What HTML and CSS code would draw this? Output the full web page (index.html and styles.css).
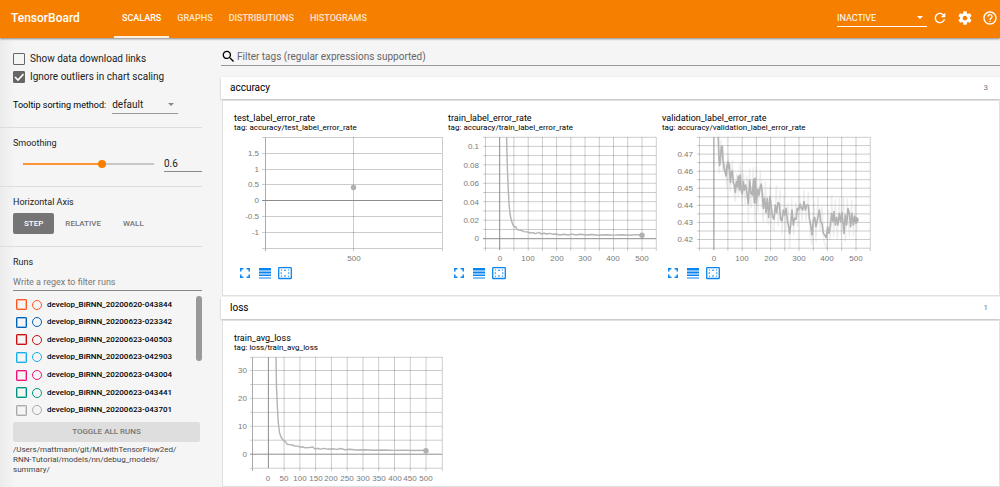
FILE: index.html
```html
<!DOCTYPE html>
<html lang="en">
<head>
<meta charset="utf-8">
<title>TensorBoard</title>
<link rel="stylesheet" href="styles.css">
</head>
<body>
<svg class="defs" aria-hidden="true">
  <symbol id="i-full" viewBox="0 0 14 14"><path d="M2.8 5.4V2.8H5.4M8.6 2.8H11.2V5.4M11.2 8.6V11.2H8.6M5.4 11.2H2.8V8.6" fill="none" stroke="currentColor" stroke-width="1.5"/></symbol>
  <symbol id="i-lines" viewBox="0 0 14 14"><path d="M1 2h12v2.6H1zM1 5.5h12v2H1zM1 8.6h12v1.5H1zM1 11.4h12v1H1z" fill="currentColor"/></symbol>
  <symbol id="i-fit" viewBox="0 0 14 14"><rect x=".7" y="1.7" width="12.6" height="10.8" rx=".6" fill="none" stroke="currentColor" stroke-width="1.3"/><path d="M7 3.2l1.4 1.5H5.6zM7 11l1.4-1.5H5.6zM2.3 7.1l1.3-1.3v2.6zM11.7 7.1l-1.3-1.3v2.6zM3 3.4h1v1H3zM10 3.4h1v1h-1zM3 9.8h1v1H3zM10 9.8h1v1h-1z" fill="currentColor"/></symbol>
</svg>

<header class="topbar">
  <h1 class="brand">TensorBoard</h1>
  <nav class="tabs">
    <a class="tab tab-active" href="#scalars">SCALARS</a>
    <a class="tab" href="#graphs">GRAPHS</a>
    <a class="tab" href="#distributions">DISTRIBUTIONS</a>
    <a class="tab" href="#histograms">HISTOGRAMS</a>
  </nav>
  <div class="actions">
    <select class="select select-inactive" aria-label="Inactive dashboards"><option>INACTIVE</option></select>
    <button class="icon-btn" aria-label="Reload"><svg viewBox="0 0 24 24"><path d="M17.65 6.35C16.2 4.9 14.21 4 12 4c-4.42 0-7.99 3.58-7.99 8s3.57 8 7.99 8c3.73 0 6.84-2.55 7.73-6h-2.08c-.82 2.33-3.04 4-5.65 4-3.31 0-6-2.69-6-6s2.69-6 6-6c1.66 0 3.14.69 4.22 1.78L13 11h7V4l-2.35 2.35z"/></svg></button>
    <button class="icon-btn" aria-label="Settings"><svg viewBox="0 0 24 24"><path d="M19.43 12.98c.04-.32.07-.64.07-.98s-.03-.66-.07-.98l2.11-1.65c.19-.15.24-.42.12-.64l-2-3.46c-.12-.22-.39-.3-.61-.22l-2.49 1c-.52-.4-1.08-.73-1.69-.98l-.38-2.65C14.46 2.18 14.25 2 14 2h-4c-.25 0-.46.18-.49.42l-.38 2.65c-.61.25-1.17.59-1.69.98l-2.49-1c-.23-.09-.49 0-.61.22l-2 3.46c-.13.22-.07.49.12.64l2.11 1.65c-.04.32-.07.65-.07.98s.03.66.07.98l-2.11 1.65c-.19.15-.24.42-.12.64l2 3.46c.12.22.39.3.61.22l2.49-1c.52.4 1.08.73 1.69.98l.38 2.65c.03.24.24.42.49.42h4c.25 0 .46-.18.49-.42l.38-2.65c.61-.25 1.17-.59 1.69-.98l2.49 1c.23.09.49 0 .61-.22l2-3.46c.12-.22.07-.49-.12-.64l-2.11-1.65zM12 15.5c-1.93 0-3.5-1.57-3.5-3.5s1.57-3.5 3.5-3.5 3.5 1.57 3.5 3.5-1.57 3.5-3.5 3.5z"/></svg></button>
    <button class="icon-btn" aria-label="Help"><svg viewBox="0 0 24 24"><path d="M11 18h2v-2h-2v2zm1-16C6.48 2 2 6.48 2 12s4.48 10 10 10 10-4.48 10-10S17.52 2 12 2zm0 18c-4.41 0-8-3.59-8-8s3.59-8 8-8 8 3.59 8 8-3.59 8-8 8zm0-14c-2.21 0-4 1.79-4 4h2c0-1.1.9-2 2-2s2 .9 2 2c0 2-3 1.75-3 5h2c0-2.25 3-2.5 3-5 0-2.21-1.79-4-4-4z"/></svg></button>
  </div>
</header>

<div class="layout">
  <aside class="sidebar">
    <section class="group group-options">
      <label class="check"><input type="checkbox"> Show data download links</label>
      <label class="check"><input type="checkbox" checked> Ignore outliers in chart scaling</label>
      <div class="sorting">
        <label for="sort">Tooltip sorting method:</label>
        <select class="select select-sort" id="sort"><option>default</option></select>
      </div>
    </section>
    <section class="group group-smoothing">
      <label class="title" for="smooth">Smoothing</label>
      <div class="slider-row">
        <input class="slider" id="smooth" type="range" min="0" max="1" step="0.1" value="0.6">
        <input class="slider-value" type="text" value="0.6" aria-label="Smoothing value">
      </div>
    </section>
    <section class="group group-axis">
      <h2 class="title">Horizontal Axis</h2>
      <div class="axis-buttons">
        <button class="axis-btn axis-on">STEP</button>
        <button class="axis-btn">RELATIVE</button>
        <button class="axis-btn">WALL</button>
      </div>
    </section>
    <section class="runs">
      <h2 class="title">Runs</h2>
      <input class="run-filter" type="text" placeholder="Write a regex to filter runs" aria-label="Filter runs">
      <div class="run-scroller">
        <ul class="run-list">
          <li class="run run-1"><input type="checkbox" id="r1"><input type="radio" name="run" aria-label="Only run 1"><label for="r1">develop_BiRNN_20200620-043844</label></li>
          <li class="run run-2"><input type="checkbox" id="r2"><input type="radio" name="run" aria-label="Only run 2"><label for="r2">develop_BiRNN_20200623-023342</label></li>
          <li class="run run-3"><input type="checkbox" id="r3"><input type="radio" name="run" aria-label="Only run 3"><label for="r3">develop_BiRNN_20200623-040503</label></li>
          <li class="run run-4"><input type="checkbox" id="r4"><input type="radio" name="run" aria-label="Only run 4"><label for="r4">develop_BiRNN_20200623-042903</label></li>
          <li class="run run-5"><input type="checkbox" id="r5"><input type="radio" name="run" aria-label="Only run 5"><label for="r5">develop_BiRNN_20200623-043004</label></li>
          <li class="run run-6"><input type="checkbox" id="r6"><input type="radio" name="run" aria-label="Only run 6"><label for="r6">develop_BiRNN_20200623-043441</label></li>
          <li class="run run-7"><input type="checkbox" id="r7"><input type="radio" name="run" aria-label="Only run 7"><label for="r7">develop_BiRNN_20200623-043701</label></li>
        </ul>
        <div class="scroll-thumb"></div>
      </div>
      <button class="toggle-all">TOGGLE ALL RUNS</button>
      <p class="logdir">/Users/mattmann/git/MLwithTensorFlow2ed/<br>RNN-Tutorial/models/nn/debug_models/<br>summary/</p>
    </section>
  </aside>

  <main class="content">
    <label class="search">
      <svg viewBox="2 2 20 20" aria-hidden="true"><path d="M15.5 14h-.79l-.28-.27C15.41 12.59 16 11.11 16 9.5 16 5.91 13.09 3 9.5 3S3 5.91 3 9.5 5.91 16 9.5 16c1.61 0 3.09-.59 4.23-1.57l.27.28v.79l5 4.99L20.49 19l-4.99-5zm-6 0C7.01 14 5 11.99 5 9.5S7.01 5 9.5 5 14 7.01 14 9.5 11.99 14 9.5 14z"/></svg>
      <input type="text" placeholder="Filter tags (regular expressions supported)" aria-label="Filter tags">
    </label>

    <section class="category">
      <button class="category-head"><span>accuracy</span><span class="count">3</span></button>
      <div class="pane">
        <article class="card">
          <h3 class="card-title">test_label_error_rate</h3>
          <p class="card-tag">tag: accuracy/test_label_error_rate</p>
          <svg class="chart" viewBox="0 0 212 132">
            <path class="grid" d="M28 5.5H208M28 21.5H208M28 37.5H208M28 52.5H208M28 84.5H208M28 100.5H208M28 116.5H208M119.5 5V119M208.5 5V119"/>
            <path class="axis" d="M31.5 5V119"/>
            <path class="zero" d="M28 68.5H208"/>
            <circle class="dot" cx="119.5" cy="55.5" r="2.7"/>
            <g class="ylab"><text x="25" y="24">1.5</text><text x="25" y="40">1</text><text x="25" y="55">0.5</text><text x="25" y="71">0</text><text x="25" y="87">-0.5</text><text x="25" y="103">-1</text></g>
            <g class="xlab"><text x="120" y="129">500</text></g>
          </svg>
          <div class="tools"><button aria-label="Fullscreen"><svg><use href="#i-full"/></svg></button><button aria-label="Log scale"><svg><use href="#i-lines"/></svg></button><button aria-label="Fit domain"><svg><use href="#i-fit"/></svg></button></div>
        </article>

        <article class="card">
          <h3 class="card-title">train_label_error_rate</h3>
          <p class="card-tag">tag: accuracy/train_label_error_rate</p>
          <svg class="chart" viewBox="0 0 212 132">
            <path class="grid" d="M35 5.3H208M35 14.4H208M35 23.6H208M35 32.8H208M35 42.1H208M35 51.3H208M35 60.5H208M35 69.7H208M35 79H208M35 88.2H208M35 97.5H208M35 116.2H208M37.5 5V119M65.9 5V119M80.2 5V119M94.4 5V119M108.6 5V119M122.8 5V119M137 5V119M151.3 5V119M165.5 5V119M179.7 5V119M194 5V119M208.3 5V119"/>
            <path class="zero" d="M35 106.7H208M51.7 5V118"/>
            <path class="line" d="M58.6 5L59.3 35L60.4 60L61.2 74L62.2 83L63.5 89L65 93L66.5 95L67.7 94.6L69 97.3L71 98L73 98.3L76 99.6L80 100L82 101L85 100.6L87 101.7L90 100.8L91.5 100.4L93 102L96 101.3L99 102L102 101.4L105 102.3L108 102L112 103L116 102.3L120 103L124 102.1L128 103L132 102.3L138 103L144 102.5L150 103.2L158 102.7L166 103.1L174 102.8L182 103.2L188 102.6L194 103"/>
            <circle class="dot" cx="194" cy="103.2" r="2.7"/>
            <g class="ylab"><text x="31" y="17">0.1</text><text x="31" y="36">0.08</text><text x="31" y="54">0.06</text><text x="31" y="73">0.04</text><text x="31" y="91">0.02</text><text x="31" y="109">0</text></g>
            <g class="xlab"><text x="52" y="129">0</text><text x="80" y="129">100</text><text x="109" y="129">200</text><text x="137" y="129">300</text><text x="165" y="129">400</text><text x="194" y="129">500</text></g>
          </svg>
          <div class="tools"><button aria-label="Fullscreen"><svg><use href="#i-full"/></svg></button><button aria-label="Log scale"><svg><use href="#i-lines"/></svg></button><button aria-label="Fit domain"><svg><use href="#i-fit"/></svg></button></div>
        </article>

        <article class="card">
          <h3 class="card-title">validation_label_error_rate</h3>
          <p class="card-tag">tag: accuracy/validation_label_error_rate</p>
          <svg class="chart" viewBox="0 0 212 132">
            <path class="grid" d="M35 5.3H208M35 13.6H208M35 22.1H208M35 30.6H208M35 39.2H208M35 47.7H208M35 56.2H208M35 64.8H208M35 73.3H208M35 81.9H208M35 90.4H208M35 99H208M35 107.5H208M35 116.2H208M37.5 5V119M65.9 5V119M80.2 5V119M94.4 5V119M108.6 5V119M122.8 5V119M137 5V119M151.3 5V119M165.5 5V119M179.7 5V119M194 5V119M208.3 5V119"/>
            <path class="zero" d="M51.9 5V118"/>
            <g transform="translate(38 -2) scale(.3333)">
              <path class="raw" d="M54 22L57 130L63 30L69 125L75 95L80 170L85 72L91 185L97 90L102 190L106 215L110 130L115 200L121 100L126 225L131 130L136 225L141 135L145 280L149 115L154 235L160 112L165 275L169 108L174 245L181 120L186 230L190 276L196 155L202 275L206 285L210 165L216 295L222 300L229 165L235 290L240 180L246 312L252 195L258 300L264 220L269 355L275 205L281 315L287 215L293 290L299 195L306 275L312 180L318 275L325 185L331 320L336 345L342 215L348 335L354 200L360 305L366 230L372 335L379 356L385 240L391 330L395 195L401 320L406 208L412 328L418 205L424 315L430 200L436 335L442 205L448 320L455 210L460 318L466 225L472 300"/>
              <path class="noisy" d="M55 20L57 85L59 106L62 80L64 50L67 49L69 90L72 112L75 125L78 138L81 108L84 95L86 115L88 102L91 157L94 130L97 122L100 158L103 165L106 187L109 155L112 170L115 138L118 180L121 135L124 185L127 192L130 155L133 180L137 165L141 190L145 222L149 150L153 190L157 195L161 148L163 218L165 145L169 220L173 178L177 195L181 170L184 162L187 190L190 235L194 205L198 248L202 205L206 262L210 200L214 230L218 262L222 268L226 225L230 248L234 218L238 222L242 268L246 273L250 240L254 255L258 235L262 270L266 290L269 310L272 285L276 240L280 285L284 265L288 268L292 235L296 240L300 222L304 235L308 240L312 215L316 240L320 225L325 225L328 265L332 285L336 315L340 270L344 262L348 290L352 270L358 240L362 275L366 280L370 310L374 315L379 323L383 290L387 310L391 290L395 250L399 275L402 245L406 285L410 262L414 285L418 250L422 275L426 248L430 285L432 310L436 255L440 285L444 236L448 250L452 290L456 250L460 285L464 258L468 280L472 270"/>
            </g>
            <circle class="dot" cx="194" cy="87.8" r="2.7"/>
            <g class="ylab"><text x="31" y="25">0.47</text><text x="31" y="42">0.46</text><text x="31" y="59">0.45</text><text x="31" y="76">0.44</text><text x="31" y="93">0.43</text><text x="31" y="110">0.42</text></g>
            <g class="xlab"><text x="52" y="129">0</text><text x="80" y="129">100</text><text x="109" y="129">200</text><text x="137" y="129">300</text><text x="165" y="129">400</text><text x="194" y="129">500</text></g>
          </svg>
          <div class="tools"><button aria-label="Fullscreen"><svg><use href="#i-full"/></svg></button><button aria-label="Log scale"><svg><use href="#i-lines"/></svg></button><button aria-label="Fit domain"><svg><use href="#i-fit"/></svg></button></div>
        </article>
      </div>
    </section>

    <section class="category category-last">
      <button class="category-head"><span>loss</span><span class="count">1</span></button>
      <div class="pane">
        <article class="card">
          <h3 class="card-title">train_avg_loss</h3>
          <p class="card-tag">tag: loss/train_avg_loss</p>
          <svg class="chart" viewBox="0 0 212 132">
            <path class="grid" d="M16 5.3H208M16 18.5H208M16 32.5H208M16 46.4H208M16 60.4H208M16 74.3H208M16 88.2H208M16 116.2H208M50.1 5V119M65.9 5V119M81.6 5V119M97.4 5V119M113.2 5V119M129 5V119M144.7 5V119M160.5 5V119M176.3 5V119M192 5V119M208.3 5V119"/>
            <path class="axis" d="M18.5 5V119"/>
            <path class="zero" d="M16 102.2H208M34.4 5V116"/>
            <path class="line" d="M42 5L42.5 35L43.4 55L44.2 70L45.6 81L47 85L49 88L50.5 89.6L51.5 89.4L53 92.3L55 92.6L58 93L61 94L64 94.1L66 95.2L69 94.8L71 95.8L75 95.6L77 95.3L78.5 94.8L81 97L84 96.3L86 97.1L91 96.4L94 97.3L98 96.8L103 97.4L107 96.5L111 97.8L116 97.3L122 98L130 97.8L140 98.2L150 98L160 98.4L170 98.2L180 98.5L192 98.3"/>
            <circle class="dot" cx="192" cy="98.7" r="2.7"/>
            <g class="ylab"><text x="13" y="21">30</text><text x="13" y="49">20</text><text x="13" y="77">10</text><text x="13" y="105">0</text></g>
            <g class="xlab"><text x="34" y="129">0</text><text x="50" y="129">50</text><text x="66" y="129">100</text><text x="82" y="129">150</text><text x="97" y="129">200</text><text x="113" y="129">250</text><text x="129" y="129">300</text><text x="145" y="129">350</text><text x="161" y="129">400</text><text x="176" y="129">450</text><text x="192" y="129">500</text></g>
          </svg>
        </article>
      </div>
    </section>
  </main>
</div>
</body>
</html>
```

FILE: styles.css
```css
* { box-sizing: border-box; }
body {
  margin: 0;
  min-height: 100vh;
  display: flex;
  flex-direction: column;
  background: #f5f5f5;
  color: #212121;
  font: 10px/12px Roboto, "Liberation Sans", sans-serif;
}
button, input, select { font: inherit; color: inherit; margin: 0; padding: 0; border: 0; border-radius: 0; background: none; outline: none; }
h1, h2, h3, p, ul { margin: 0; padding: 0; font-weight: 400; font-size: inherit; }
ul { list-style: none; }
.defs { display: none; }

.topbar {
  display: flex;
  align-items: center;
  height: 38px;
  padding: 0 2px 0 11px;
  background: #f77f00;
  color: #fff;
  box-shadow: 0 1px 2px rgba(0, 0, 0, .45);
  z-index: 1;
}
.brand { width: 103px; font-size: 12px; font-weight: 500; line-height: 36px; padding-bottom: 2px; }
.tabs { display: flex; height: 38px; }
.tab { padding: 0 8px; line-height: 36px; font-size: 9px; font-weight: 500; color: #ffe5cc; text-decoration: none; border-bottom: 2px solid transparent; }
.tab-active { color: #fff; border-color: #fff0e0; }
.actions { display: flex; align-items: center; gap: 9px; margin-left: auto; padding-bottom: 2px; }
.icon-btn { display: block; width: 16px; height: 16px; }
.icon-btn svg { display: block; width: 16px; height: 16px; fill: #fff; }

.select { appearance: none; background-repeat: no-repeat; }
.select-inactive {
  width: 90px;
  height: 18px;
  margin-right: -4px;
  font-size: 9px;
  border-bottom: 1px solid #fff;
  background-image: url("data:image/svg+xml,%3Csvg xmlns='http://www.w3.org/2000/svg' width='6' height='3'%3E%3Cpath d='M0 0h6L3 3z' fill='%23fff'/%3E%3C/svg%3E");
  background-position: right 4px center;
}
.select-sort {
  width: 66px;
  height: 18px;
  font-size: 10px;
  border-bottom: 1px solid #999;
  background-image: url("data:image/svg+xml,%3Csvg xmlns='http://www.w3.org/2000/svg' width='6' height='3'%3E%3Cpath d='M0 0h6L3 3z' fill='%23888'/%3E%3C/svg%3E");
  background-position: right 4px center;
}

.layout { display: flex; flex: 1; }
.sidebar { width: 221px; padding-right: 19px; background: linear-gradient(90deg, #ececec, #f5f5f5 16px); }
.group { padding-left: 13px; border-bottom: 1px solid #ddd; }
.title { display: block; font-size: 9px; line-height: 12px; }
.group-options { padding-top: 12px; height: 90px; }
.check { display: flex; align-items: center; gap: 5px; height: 18px; }
.check input { appearance: none; width: 12px; height: 12px; border: 1px solid #666; border-radius: 1px; }
.check input:checked {
  background: #666 url("data:image/svg+xml,%3Csvg xmlns='http://www.w3.org/2000/svg' viewBox='0 0 12 12'%3E%3Cpath d='M2 6l3 3 5.5-6' fill='none' stroke='%23fff' stroke-width='1.6'/%3E%3C/svg%3E") center / 12px;
}
.sorting { display: flex; align-items: center; gap: 6px; margin-top: 10px; font-size: 9px; }
.sorting label { white-space: nowrap; color: #000; }
.group-smoothing { padding-top: 9px; height: 59px; }
.slider-row { display: flex; justify-content: space-between; align-items: center; padding: 6px 0 0 6px; }
.slider {
  appearance: none;
  width: 139px;
  height: 10px;
  background: linear-gradient(90deg, #fb9333 60%, #c6c8c8 60%) no-repeat center / calc(100% - 8px) 2px;
}
.slider::-webkit-slider-thumb { appearance: none; width: 8px; height: 8px; border-radius: 50%; background: #f77f00; }
.slider-value { width: 38px; height: 17px; border-bottom: 1px solid #888; }
.group-axis { padding-top: 9px; height: 60px; }
.axis-buttons { display: flex; margin-top: 5px; }
.axis-btn { height: 21px; padding: 0 11px; border-radius: 2px; font-size: 8px; font-weight: 500; color: #757575; }
.axis-on { background: #757575; color: #fff; }
.runs { padding: 9px 0 0 13px; }
.run-filter { display: block; width: 100%; height: 18px; margin-top: 5px; font-size: 9px; border-bottom: 1px solid #888; }
.run-filter::placeholder { color: #777; opacity: 1; }
.run-scroller { display: flex; justify-content: space-between; padding: 5px 0 3px; }
.run-list { display: grid; grid-auto-rows: 1fr; height: 123px; }
.run { display: flex; align-items: center; font-size: 8px; font-weight: 500; color: #000; padding-left: 3px; }
.run input { appearance: none; border: 1px solid; }
.run input[type="checkbox"] { width: 11px; height: 11px; outline: 1px solid; outline-offset: -2px; border-radius: 1px; outline-color: color-mix(in srgb, currentColor 40%, transparent); }
.run input[type="radio"] { width: 10px; height: 10px; border-radius: 50%; margin: 0 5px 0 5px; }
.run-1 input { color: #ff5722; }
.run-2 input { color: #0062b8; }
.run-3 input { color: #cc1111; }
.run-4 input { color: #18aee8; }
.run-5 input { color: #ee1479; }
.run-6 input { color: #009480; }
.run-7 input { color: #aaa; }
.scroll-thumb { width: 6px; height: 65px; border-radius: 3px; background: #999; }
.toggle-all { display: block; width: calc(100% - 2px); height: 20px; border-radius: 2px; background: #dedede; color: #757575; font-size: 8px; font-weight: 500; }
.logdir { margin-top: 3px; font-size: 8px; line-height: 10px; color: #444; }

.content { flex: 1; min-width: 0; display: flex; flex-direction: column; }
.search { display: flex; align-items: center; gap: 2px; height: 18px; margin: 10px 0 11px; padding-left: 1px; border-bottom: 1px solid #999; }
.search svg { width: 13px; height: 13px; }
.search input { flex: 1; font-size: 10px; }
.search input::placeholder { color: #666; opacity: 1; }
.category { margin-bottom: 1px; }
.category-head { display: flex; justify-content: space-between; align-items: center; width: 100%; height: 22px; padding: 0 12px 0 9px; background: #fff; color: #000; font-size: 10px; box-shadow: 0 1px 2px rgba(0, 0, 0, .25); }
.count { font-size: 8px; color: #777; }
.pane { display: flex; flex-wrap: wrap; gap: 2px; margin: 1px 0 0 1px; padding: 12px 12px 15px 11px; background: #fff; border: 1px solid #e0e0e0; }
.category-last { flex: 1; display: flex; flex-direction: column; margin: 0; }
.category-last .pane { flex: 1; padding-bottom: 0; }
.card { width: 212px; }
.card-title { font-size: 9px; line-height: 10px; color: #000; }
.card-tag { font-size: 8px; line-height: 9px; color: #000; }
.chart { display: block; width: 212px; height: 132px; }
.grid { fill: none; stroke: #000; stroke-opacity: .2; }
.axis { fill: none; stroke: #aaa; }
.zero { fill: none; stroke: #8c8c8c; }
.line { fill: none; stroke: #b3b3b3; stroke-width: 1.4; stroke-linejoin: round; }
.noisy { fill: none; stroke: #b3b3b3; stroke-width: 5; stroke-linejoin: round; }
.raw { fill: none; stroke: #bbb; stroke-opacity: .25; stroke-width: 4; }
.dot { fill: #b0b0b0; }
.ylab, .xlab { font: 8px "Liberation Sans", sans-serif; fill: #7a7a7a; }
.ylab { text-anchor: end; }
.xlab { text-anchor: middle; }
.tools { display: flex; gap: 6px; padding: 2px 0 0 4px; }
.tools button { display: block; width: 14px; height: 14px; color: #0a84f0; }
.tools svg { display: block; width: 14px; height: 14px; }
```
